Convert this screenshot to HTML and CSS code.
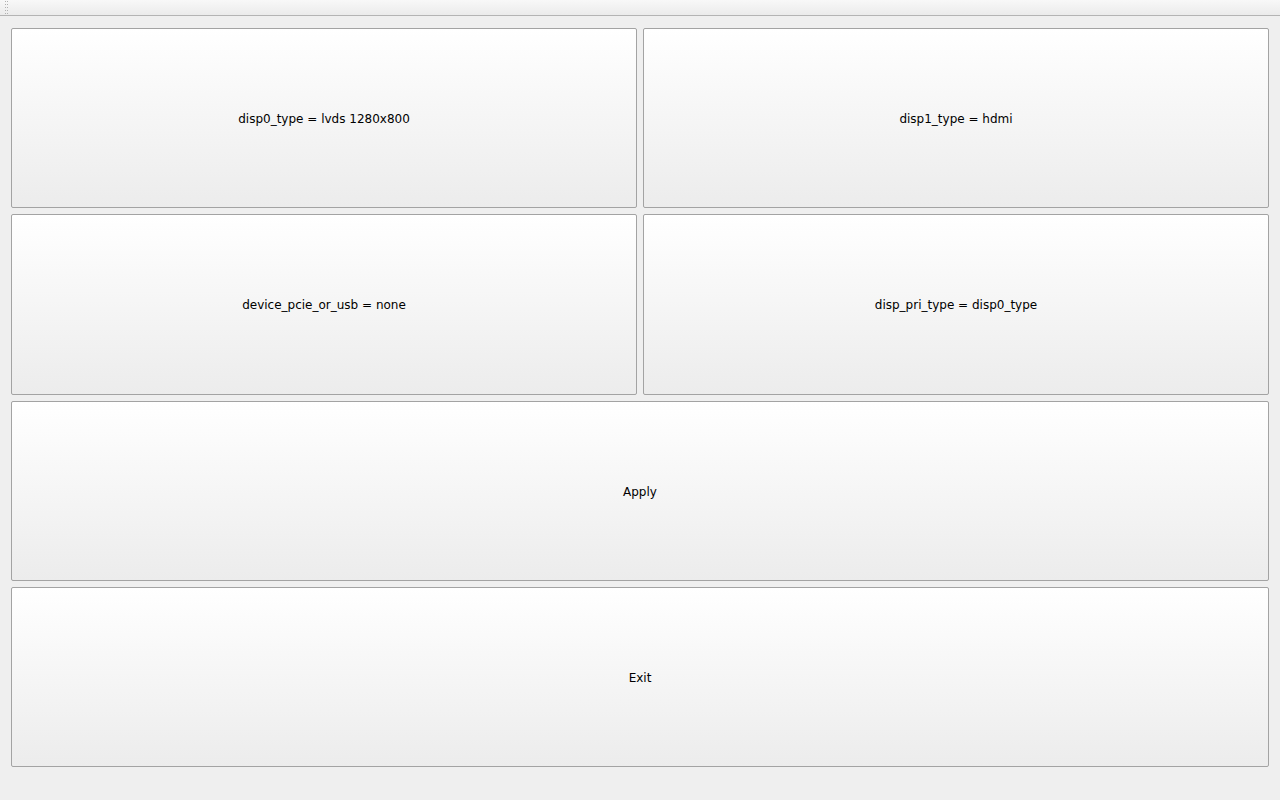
FILE: index.html
```html
<!DOCTYPE html>
<html lang="en">
<head>
  <meta charset="UTF-8">
  <title>Display Config</title>
  <link rel="stylesheet" href="styles.css">
</head>
<body>
  <div class="toolbar">
    <span class="grip"></span>
  </div>
  <div class="panel">
    <button class="btn">disp0_type = lvds 1280x800</button>
    <button class="btn">disp1_type = hdmi</button>
    <button class="btn">device_pcie_or_usb = none</button>
    <button class="btn">disp_pri_type = disp0_type</button>
    <button class="btn wide">Apply</button>
    <button class="btn wide">Exit</button>
  </div>
</body>
</html>
```

FILE: styles.css
```css
html, body {
  margin: 0;
  height: 100%;
}
body {
  background: #efefef;
  font-family: 'DejaVu Sans', sans-serif;
  font-size: 12px;
  color: #000;
  overflow: hidden;
}
.toolbar {
  height: 15px;
  border-bottom: 1px solid #b4b4b4;
  background: linear-gradient(#f8f8f8, #ebebeb);
  display: flex;
  align-items: stretch;
}
.grip {
  width: 3px;
  margin-left: 5px;
  background:
    linear-gradient(#b0b0b0 1px, transparent 1px) 0 1px / 1px 3px repeat-y,
    linear-gradient(#b0b0b0 1px, transparent 1px) 2px 1px / 1px 3px repeat-y;
}
.panel {
  display: grid;
  grid-template-columns: 1fr 1fr;
  grid-template-rows: 180px 181px 180px 180px;
  gap: 6px;
  padding: 12px 11px 0 11px;
}
.btn {
  font-family: 'DejaVu Sans', sans-serif;
  font-size: 12px;
  color: #000;
  border: 1px solid #a3a3a3;
  border-radius: 2px;
  background: linear-gradient(#ffffff, #ececec);
  padding: 1px 0 0 0;
  margin: 0;
}
.wide {
  grid-column: 1 / 3;
}
```
